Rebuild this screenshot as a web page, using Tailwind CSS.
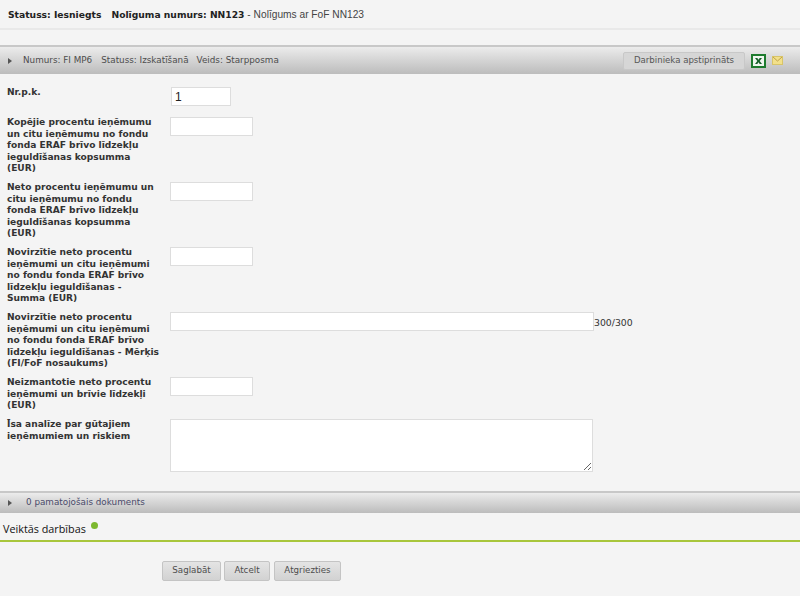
<!DOCTYPE html>
<html lang="lv">
<head>
<meta charset="utf-8">
<script src="https://cdn.jsdelivr.net/npm/@tailwindcss/browser@4"></script>
</head>
<body class="m-0 bg-[#f4f4f4] font-['DejaVu_Sans',sans-serif] text-[#222] h-[596px] w-[800px] overflow-hidden">
  <div class="h-[30px] border-b-2 border-[#e9e9e9] pl-[8px] pt-[9px] text-[9.2px] leading-[12px] flex gap-[10px]">
    <b class="text-[#222]">Statuss: Iesniegts</b>
    <span><b>Nolīguma numurs: NN123</b> - <span class="text-[#444] font-['Liberation_Sans',sans-serif] text-[10.2px]">Nolīgums ar FoF NN123</span></span>
  </div>
  <div class="mt-[15px] h-[29px] border-t-2 border-[#c8c8c8] bg-gradient-to-b from-[#ececec] to-[#bcbcbc] flex items-center pl-[8px] pr-[17px] text-[8.8px] text-[#4d4d4d]">
    <span class="w-0 h-0 border-y-[3px] border-y-transparent border-l-[4px] border-l-[#555]"></span>
    <span class="ml-[11px]">Numurs: FI MP6</span>
    <span class="ml-[9px]">Statuss: Izskatīšanā</span>
    <span class="ml-[8px]">Veids: Starpposma</span>
    <span class="ml-auto h-[18px] w-[122px] rounded-[2px] border border-[#c8c8c8] bg-[#d6d6d6] flex items-center justify-center text-[8.6px] text-[#555]">Darbinieka apstiprināts</span>
    <svg class="ml-[6px]" width="15" height="14" viewBox="0 0 15 14"><rect x="1" y="1" width="13" height="12" fill="#eef6ee" stroke="#1e7b2e" stroke-width="2"/><path d="M4 4h2.300l1.200 1.700L8.700 4H11L8.700 7 11 10H8.700L7.500 8.300 6.300 10H4l2.300-3z" fill="#17602a"/></svg>
    <svg class="ml-[6px]" width="11" height="9" viewBox="0 0 11 9"><rect x="0.5" y="0.500" width="10" height="8" fill="#f2e08a" stroke="#d8c468"/><path d="M1 1l4.500 4L10 1" fill="none" stroke="#bfa24a"/></svg>
  </div>

  <div class="pl-[7px] pt-[13px] text-[9.1px] leading-[11.5px] font-bold text-[#333]">
    <div class="flex h-[30px]">
      <div class="w-[164px]">Nr.p.k.</div>
      <input value="1" class="w-[60px] h-[19px] bg-white border border-[#ddd] text-[12px] font-normal px-[3px] text-[#222] font-['Liberation_Sans',sans-serif]">
    </div>
    <div class="flex h-[65px]">
      <div class="w-[163px] pr-[8px]">Kopējie procentu ieņēmumu un citu ieņēmumu no fondu fonda ERAF brīvo līdzekļu ieguldīšanas kopsumma (EUR)</div>
      <input class="w-[83px] h-[19px] bg-white border border-[#ddd]">
    </div>
    <div class="flex h-[65px]">
      <div class="w-[163px] pr-[8px]">Neto procentu ieņēmumu un citu ieņēmumu no fondu fonda ERAF brīvo līdzekļu ieguldīšanas kopsumma (EUR)</div>
      <input class="w-[83px] h-[19px] bg-white border border-[#ddd]">
    </div>
    <div class="flex h-[65px]">
      <div class="w-[163px] pr-[12px]">Novirzītie neto procentu ieņēmumi un citu ieņēmumi no fondu fonda ERAF brīvo līdzekļu ieguldīšanas - Summa (EUR)</div>
      <input class="w-[83px] h-[19px] bg-white border border-[#ddd]">
    </div>
    <div class="flex h-[65px]">
      <div class="w-[163px] pr-[8px]">Novirzītie neto procentu ieņēmumi un citu ieņēmumi no fondu fonda ERAF brīvo līdzekļu ieguldīšanas - Mērķis (FI/FoF nosaukums)</div>
      <input class="w-[424px] h-[19px] bg-white border border-[#ddd]">
      <span class="font-normal text-[9.300px] leading-[21px] text-[#333]">300/300</span>
    </div>
    <div class="flex h-[42px]">
      <div class="w-[163px] pr-[8px]">Neizmantotie neto procentu ieņēmumi un brīvie līdzekļi (EUR)</div>
      <input class="w-[83px] h-[19px] bg-white border border-[#ddd]">
    </div>
    <div class="flex h-[72px]">
      <div class="w-[163px] pr-[8px]">Īsa analīze par gūtajiem ieņēmumiem un riskiem</div>
      <textarea class="w-[423px] h-[53px] bg-white border border-[#ddd] resize-y"></textarea>
    </div>
  </div>

  <div class="h-[22px] border-t-2 border-[#c8c8c8] bg-gradient-to-b from-[#ececec] to-[#bcbcbc] flex items-center pl-[8px] text-[8.8px] text-[#4a4a6a]">
    <span class="w-0 h-0 border-y-[3px] border-y-transparent border-l-[4px] border-l-[#555]"></span>
    <span class="ml-[14px]">0 pamatojošais dokuments</span>
  </div>
  <div class="h-[29px] border-b-2 border-[#a8c63c] pl-[3px] pt-[9px] flex items-start text-[10.8px] font-medium leading-[14px] text-[#111] font-['Open_Sans',sans-serif]">
    Veiktās darbības
    <span class="ml-[5px] mt-[0px] w-[7px] h-[7px] rounded-full bg-[#7cb82f]"></span>
  </div>
  <div class="flex pl-[162px] pt-[19px] text-[8.7px] text-[#4d4d4d]">
    <span class="w-[59px] h-[20px] rounded-[2px] border border-[#c4c4c4] bg-gradient-to-b from-[#e4e4e4] to-[#d2d2d2] flex items-center justify-center">Saglabāt</span>
    <span class="ml-[3px] w-[46px] h-[20px] rounded-[2px] border border-[#c4c4c4] bg-gradient-to-b from-[#e4e4e4] to-[#d2d2d2] flex items-center justify-center">Atcelt</span>
    <span class="ml-[4px] w-[67px] h-[20px] rounded-[2px] border border-[#c4c4c4] bg-gradient-to-b from-[#e4e4e4] to-[#d2d2d2] flex items-center justify-center">Atgriezties</span>
  </div>
</body>
</html>
